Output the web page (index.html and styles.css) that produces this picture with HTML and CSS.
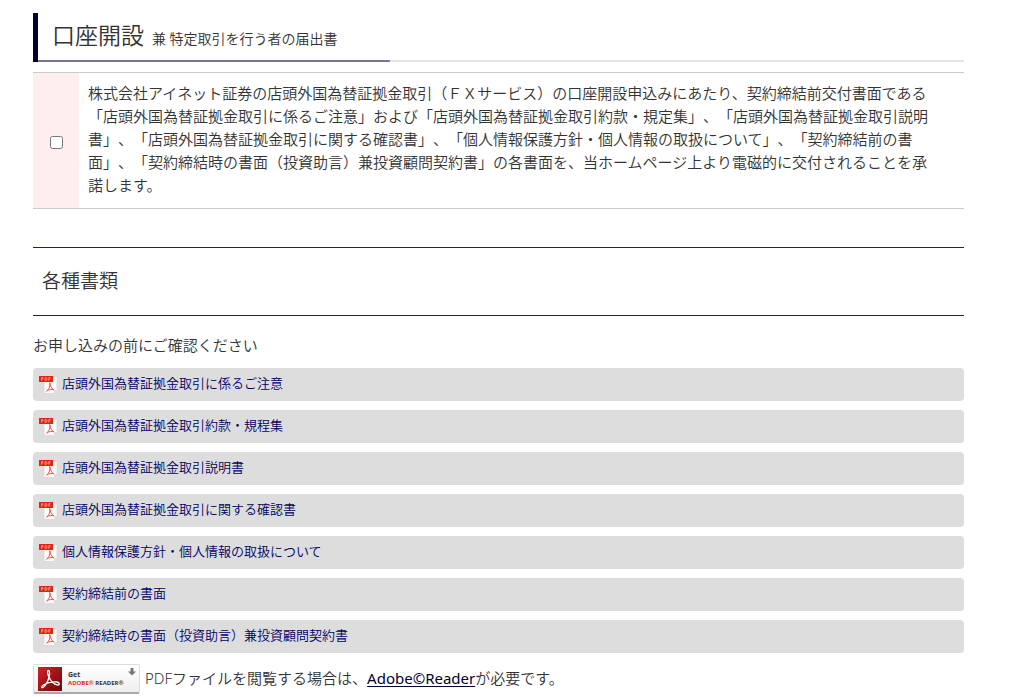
FILE: index.html
```html
<!DOCTYPE html>
<html lang="ja">
<head>
<meta charset="utf-8">
<title>口座開設</title>
<meta name="viewport" content="width=device-width, initial-scale=1">
<link rel="stylesheet" href="styles.css">
</head>
<body>
<svg class="sprite" aria-hidden="true">
  <symbol id="pdf" viewBox="0 0 19 18">
    <path d="M5 1h13v13l-3 3.500H5z" fill="#fbfbfb" stroke="#d0d0d0" stroke-width=".6"/>
    <path d="M15 17.500V14h3z" fill="#ddd"/>
    <path d="M0 0h14v6H0z" fill="#e32412"/>
    <path d="M2.500 4.600V1.600h1.300v1.500H2.500M6 1.600v2.700h1q1-.1 1-1.300T7 1.600zM9.800 4.600v-3h1.800M9.800 3h1.500" fill="none" stroke="#f9a99c" stroke-width=".8"/>
    <path d="M10.800 6.500c.5 3.500 1.500 6 4.200 7.300-2.600-.8-5-.4-7.500 1.400 2.400-1.700 3.700-4.600 3.300-8.700" fill="none" stroke="#ee5a4c" stroke-width="1"/>
  </symbol>
</svg>
<main class="page">
  <h1 class="title">口座開設 <small class="title-sub">兼 特定取引を行う者の届出書</small></h1>

  <div class="consent">
    <div class="consent-check"><input class="checkbox" type="checkbox" id="agree"></div>
    <label class="consent-text" for="agree">株式会社アイネット証券の店頭外国為替証拠金取引（ＦＸサービス）の口座開設申込みにあたり、契約締結前交付書面である「店頭外国為替証拠金取引に係るご注意」および「店頭外国為替証拠金取引約款・規定集」、「店頭外国為替証拠金取引説明書」、「店頭外国為替証拠金取引に関する確認書」、「個人情報保護方針・個人情報の取扱について」、「契約締結前の書面」、「契約締結時の書面（投資助言）兼投資顧問契約書」の各書面を、当ホームページ上より電磁的に交付されることを承諾します。</label>
  </div>

  <h2 class="section-title">各種書類</h2>
  <p class="lead">お申し込みの前にご確認ください</p>
  <ul class="docs">
    <li><a class="doc" href="#"><svg class="doc-icon" aria-hidden="true"><use href="#pdf"/></svg><span class="doc-name">店頭外国為替証拠金取引に係るご注意</span></a></li>
    <li><a class="doc" href="#"><svg class="doc-icon" aria-hidden="true"><use href="#pdf"/></svg><span class="doc-name">店頭外国為替証拠金取引約款・規程集</span></a></li>
    <li><a class="doc" href="#"><svg class="doc-icon" aria-hidden="true"><use href="#pdf"/></svg><span class="doc-name">店頭外国為替証拠金取引説明書</span></a></li>
    <li><a class="doc" href="#"><svg class="doc-icon" aria-hidden="true"><use href="#pdf"/></svg><span class="doc-name">店頭外国為替証拠金取引に関する確認書</span></a></li>
    <li><a class="doc" href="#"><svg class="doc-icon" aria-hidden="true"><use href="#pdf"/></svg><span class="doc-name">個人情報保護方針・個人情報の取扱について</span></a></li>
    <li><a class="doc" href="#"><svg class="doc-icon" aria-hidden="true"><use href="#pdf"/></svg><span class="doc-name">契約締結前の書面</span></a></li>
    <li><a class="doc" href="#"><svg class="doc-icon" aria-hidden="true"><use href="#pdf"/></svg><span class="doc-name">契約締結時の書面（投資助言）兼投資顧問契約書</span></a></li>
  </ul>

  <div class="reader">
    <a class="badge" href="#">
      <svg class="badge-logo" viewBox="0 0 24 24" aria-hidden="true">
        <defs><linearGradient id="red" x2="1" y2="1"><stop stop-color="#d5202a"/><stop offset="1" stop-color="#6e0508"/></linearGradient></defs>
        <path d="M0 0h24v24H0z" fill="url(#red)"/>
        <path d="M10.500 3.500c-1.500 0-1 3.500.3 6.300 1.700 3.800 5 7.700 8.700 8.200 2.500.2 2.400-2.600-.5-3-4.500-.6-10 .7-13.600 3-2.500 1.700-2 3.300-.4 2.500 2.200-1.200 5.300-6.500 6.200-11 .5-2.700.7-6-.7-6z" fill="none" stroke="#fff" stroke-width="1.300"/>
      </svg>
      <span class="badge-label">Get<span class="badge-name"><span class="badge-brand">ADOBE®</span> READER®</span></span>
      <svg class="badge-arrow" viewBox="0 0 8 8" aria-hidden="true"><path d="M2.500 0h3v3.500H8L4 7.500 0 3.500h2.500z" fill="#777"/></svg>
    </a>
    <p class="reader-text">PDFファイルを閲覧する場合は、<a class="reader-link" href="#">Adobe©Reader</a>が必要です。</p>
  </div>
</main>
</body>
</html>
```
FILE: styles.css
```css
* { box-sizing: border-box; }

body {
  margin: 0;
  background: #fff;
  color: #333;
  font: 15px/23px "Noto Sans", "Noto Sans CJK JP", sans-serif;
  font-weight: 350;
  text-spacing-trim: space-all;
}

.sprite { display: none; }

.page { padding: 13px 60px 0 33px; }

.title {
  margin: 0 0 10px;
  padding: 0 14px 4px;
  border-left: 5px solid #003;
  background:
    linear-gradient(#75759a, #75759a) left bottom / 38% 2px no-repeat,
    linear-gradient(#e2e5ec, #e2e5ec) left bottom / 100% 2px no-repeat;
  font-size: 23px;
  font-weight: inherit;
  line-height: 45px;
}

.title-sub { margin-left: 2px; font-size: 14px; line-height: 1; }

.consent {
  display: flex;
  margin-bottom: 38px;
  border-top: 1px solid #ccc;
  border-bottom: 1px solid #ccc;
}

.consent-check {
  display: flex;
  flex: 0 0 46px;
  align-items: center;
  justify-content: center;
  padding-top: 4px;
  background: #fee;
}

.checkbox { width: 13px; height: 13px; margin: 0; }

.consent-text { flex: 1; padding: 9px 24px 11px 9px; }

.section-title {
  margin: 0 0 18px;
  padding: 0 9px;
  border-top: 1px solid #224;
  border-bottom: 1px solid #224;
  font-size: 19px;
  font-weight: inherit;
  line-height: 67px;
}

.lead { margin: 0 0 11px; }

.docs {
  display: grid;
  gap: 9px;
  margin: 0 0 11px;
  padding: 0;
  list-style: none;
}

.doc {
  display: flex;
  align-items: center;
  height: 33px;
  padding: 0 6px;
  border-radius: 4px;
  background: #ddd;
  color: #006;
  font-size: 13px;
  text-decoration: none;
}

.doc-icon { width: 19px; height: 18px; margin-right: 4px; }

.doc-name { padding-bottom: 2px; }

.reader { display: flex; align-items: center; gap: 5px; }

.badge {
  position: relative;
  display: flex;
  align-items: center;
  gap: 6px;
  width: 107px;
  height: 30px;
  padding-left: 4px;
  border: 1px solid #ddd;
  border-bottom: 2px solid #aaa;
  border-radius: 2px;
  background: linear-gradient(#fff, #eee);
  color: #333;
  font: bold 7px/8px "Open Sans", sans-serif;
  text-decoration: none;
}

.badge-logo { flex: none; width: 24px; height: 24px; }

.badge-name { display: block; font-size: 6px; white-space: nowrap; }

.badge-brand { color: #f22; }

.badge-arrow { position: absolute; top: 3px; right: 3px; width: 8px; height: 8px; }

.reader-text { margin: 0; padding-bottom: 2px; }

.reader-link { color: #003; font-weight: 400; text-underline-offset: 2px; }
```
